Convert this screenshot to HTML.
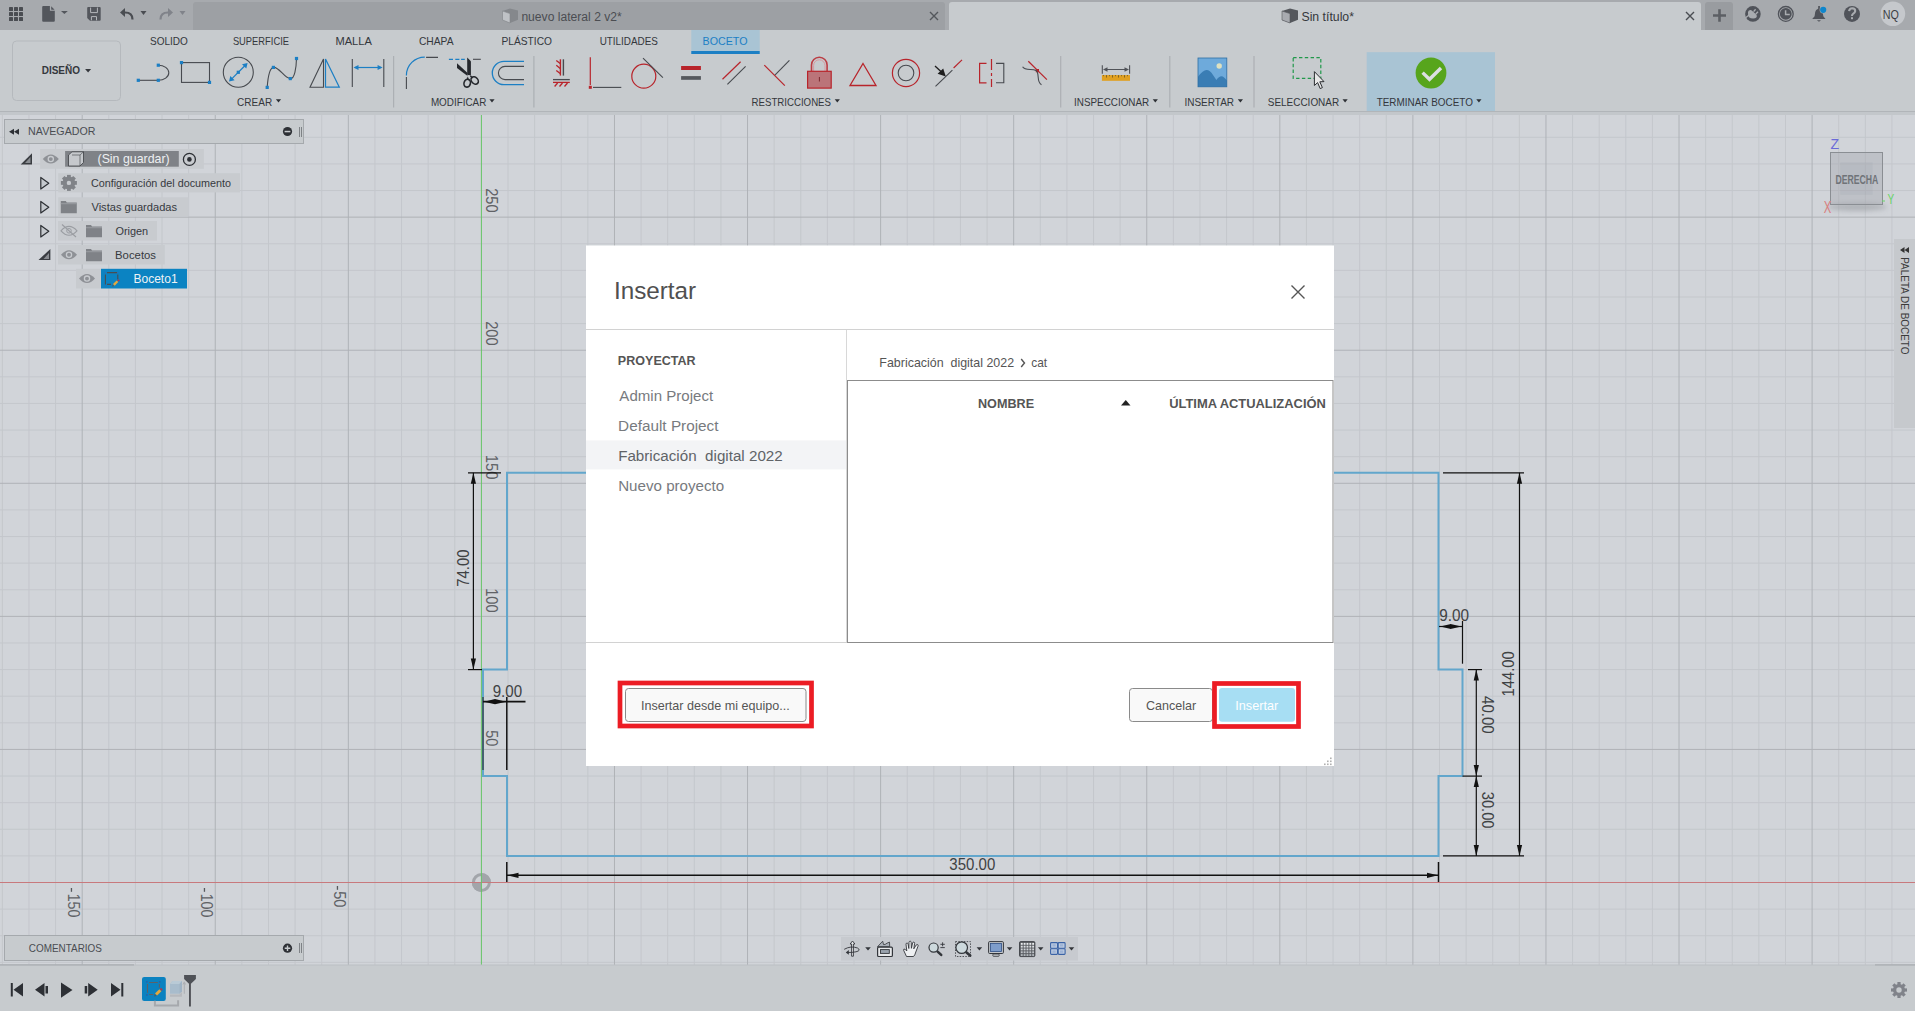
<!DOCTYPE html>
<html><head><meta charset="utf-8"><style>
html,body{margin:0;padding:0;width:1915px;height:1011px;overflow:hidden;background:#d1d4d9;}
svg{display:block;font-family:"Liberation Sans", sans-serif;}
</style></head><body>
<svg width="1915" height="1011" viewBox="0 0 1915 1011">
<rect x="0" y="0" width="1915" height="1011" fill="#d1d4d9" />
<path d="M2.35,115V965M28.96,115V965M55.58,115V965M108.80,115V965M135.42,115V965M162.03,115V965M188.65,115V965M241.87,115V965M268.49,115V965M295.10,115V965M321.72,115V965M374.94,115V965M401.56,115V965M428.17,115V965M454.79,115V965M508.01,115V965M534.63,115V965M561.24,115V965M587.86,115V965M641.08,115V965M667.70,115V965M694.31,115V965M720.93,115V965M774.15,115V965M800.77,115V965M827.38,115V965M854.00,115V965M907.22,115V965M933.84,115V965M960.45,115V965M987.07,115V965M1040.29,115V965M1066.91,115V965M1093.52,115V965M1120.14,115V965M1173.36,115V965M1199.98,115V965M1226.59,115V965M1253.21,115V965M1306.43,115V965M1333.05,115V965M1359.66,115V965M1386.28,115V965M1439.50,115V965M1466.12,115V965M1492.73,115V965M1519.35,115V965M1572.57,115V965M1599.19,115V965M1625.80,115V965M1652.42,115V965M1705.64,115V965M1732.26,115V965M1758.87,115V965M1785.49,115V965M1838.71,115V965M1865.33,115V965M1891.94,115V965M0,962.34H1915M0,935.73H1915M0,909.11H1915M0,855.89H1915M0,829.27H1915M0,802.66H1915M0,776.04H1915M0,722.82H1915M0,696.20H1915M0,669.59H1915M0,642.97H1915M0,589.75H1915M0,563.13H1915M0,536.52H1915M0,509.90H1915M0,456.68H1915M0,430.06H1915M0,403.45H1915M0,376.83H1915M0,323.61H1915M0,296.99H1915M0,270.38H1915M0,243.76H1915M0,190.54H1915M0,163.92H1915M0,137.31H1915" stroke="#c4c7cc" stroke-width="1" fill="none"/>
<path d="M82.19,115V965M215.26,115V965M348.33,115V965M614.47,115V965M747.54,115V965M880.61,115V965M1013.68,115V965M1146.75,115V965M1279.82,115V965M1412.89,115V965M1545.96,115V965M1679.03,115V965M1812.10,115V965M0,749.43H1915M0,616.36H1915M0,483.29H1915M0,350.22H1915M0,217.15H1915" stroke="#afb2b7" stroke-width="1" fill="none"/>
<circle cx="481.4" cy="882.5" r="8" fill="none" stroke="#a2a5aa" stroke-width="3"/>
<path d="M481.4,882.5 L481.4,873.0 A9.5,9.5 0 0 1 490.9,882.5 Z" fill="#a2a5aa"/>
<path d="M481.4,882.5 L481.4,892.0 A9.5,9.5 0 0 1 471.9,882.5 Z" fill="#a2a5aa"/>
<line x1="0" y1="882.5" x2="1915" y2="882.5" stroke="#c8797d" stroke-width="1" />
<line x1="481.4" y1="115" x2="481.4" y2="965" stroke="#66c466" stroke-width="1" />
<g transform="translate(491.50,188.90) rotate(90)">
<text x="-0.73" y="5.50" font-size="15.99" font-weight="normal" fill="#606266" textLength="24.39" lengthAdjust="spacingAndGlyphs" style="white-space:pre" >250</text>
</g>
<g transform="translate(491.50,321.90) rotate(90)">
<text x="-0.73" y="5.50" font-size="15.99" font-weight="normal" fill="#606266" textLength="24.39" lengthAdjust="spacingAndGlyphs" style="white-space:pre" >200</text>
</g>
<g transform="translate(491.50,455.80) rotate(90)">
<text x="-1.11" y="5.50" font-size="15.99" font-weight="normal" fill="#606266" textLength="24.68" lengthAdjust="spacingAndGlyphs" style="white-space:pre" >150</text>
</g>
<g transform="translate(491.30,589.30) rotate(90)">
<text x="-1.09" y="5.50" font-size="15.99" font-weight="normal" fill="#606266" textLength="24.36" lengthAdjust="spacingAndGlyphs" style="white-space:pre" >100</text>
</g>
<g transform="translate(491.30,730.90) rotate(90)">
<text x="-0.58" y="5.50" font-size="15.99" font-weight="normal" fill="#606266" textLength="16.05" lengthAdjust="spacingAndGlyphs" style="white-space:pre" >50</text>
</g>
<g transform="translate(73.60,894.70) rotate(90)">
<text x="-1.07" y="5.50" font-size="15.99" font-weight="normal" fill="#606266" textLength="23.82" lengthAdjust="spacingAndGlyphs" style="white-space:pre" >150</text>
</g>
<g transform="translate(206.80,894.70) rotate(90)">
<text x="-1.07" y="5.50" font-size="15.99" font-weight="normal" fill="#606266" textLength="23.82" lengthAdjust="spacingAndGlyphs" style="white-space:pre" >100</text>
</g>
<g transform="translate(339.90,891.80) rotate(90)">
<text x="-0.58" y="5.50" font-size="15.99" font-weight="normal" fill="#606266" textLength="16.27" lengthAdjust="spacingAndGlyphs" style="white-space:pre" >50</text>
</g>
<g fill="#55585c"><rect x="70.8" y="888" width="1.3" height="3.8"/><rect x="203.8" y="888" width="1.3" height="3.8"/><rect x="336.8" y="886" width="1.3" height="3.8"/></g>
<path d="M507,472.8 L1438.5,472.8 L1438.5,669.6 L1462.5,669.6 L1462.5,776.1 L1438.5,776.1 L1438.5,855.9 L507,855.9 L507,776.1 L483,776.1 L483,669.6 L507,669.6 Z" stroke="#62a6cc" stroke-width="2" fill="none"/>
<line x1="468" y1="472.8" x2="501" y2="472.8" stroke="#111" stroke-width="1.2" />
<line x1="468" y1="669.6" x2="482" y2="669.6" stroke="#111" stroke-width="1.2" />
<line x1="473.4" y1="472.8" x2="473.4" y2="669.6" stroke="#111" stroke-width="1.2" />
<path d="M473.4,472.8 L476.00,483.80 L470.80,483.80 Z" fill="#111"/>
<path d="M473.4,669.6 L470.80,658.60 L476.00,658.60 Z" fill="#111"/>
<g transform="translate(468.5,586) rotate(-90)">
<text x="-0.75" y="0.00" font-size="16.28" font-weight="normal" fill="#404244" textLength="37.30" lengthAdjust="spacingAndGlyphs" style="white-space:pre" >74.00</text>
</g>
<line x1="483" y1="697" x2="483" y2="770" stroke="#333" stroke-width="1.2" />
<line x1="506.8" y1="697" x2="506.8" y2="770" stroke="#111" stroke-width="1.5" />
<line x1="483" y1="701.7" x2="525.5" y2="701.7" stroke="#111" stroke-width="1.8" />
<path d="M484,701.7 L495.00,699.10 L495.00,704.30 Z" fill="#111"/>
<path d="M506,701.7 L495.00,704.30 L495.00,699.10 Z" fill="#111"/>
<text x="492.68" y="697.00" font-size="16.42" font-weight="normal" fill="#404244" textLength="29.40" lengthAdjust="spacingAndGlyphs" style="white-space:pre" >9.00</text>
<line x1="1462.5" y1="621" x2="1462.5" y2="663.7" stroke="#111" stroke-width="1.2" />
<line x1="1439" y1="626.5" x2="1462.5" y2="626.5" stroke="#111" stroke-width="1.2" />
<path d="M1440,626.5 L1451.00,623.90 L1451.00,629.10 Z" fill="#111"/>
<path d="M1461.5,626.5 L1450.50,629.10 L1450.50,623.90 Z" fill="#111"/>
<text x="1439.17" y="621.00" font-size="16.42" font-weight="normal" fill="#404244" textLength="29.82" lengthAdjust="spacingAndGlyphs" style="white-space:pre" >9.00</text>
<line x1="1443" y1="472.8" x2="1524" y2="472.8" stroke="#111" stroke-width="1.2" />
<line x1="1443" y1="855.9" x2="1524" y2="855.9" stroke="#111" stroke-width="1.2" />
<line x1="1519.5" y1="472.8" x2="1519.5" y2="855.9" stroke="#111" stroke-width="1.2" />
<path d="M1519.5,472.8 L1522.10,483.80 L1516.90,483.80 Z" fill="#111"/>
<path d="M1519.5,855.9 L1516.90,844.90 L1522.10,844.90 Z" fill="#111"/>
<g transform="translate(1513.9,695.4) rotate(-90)">
<text x="-1.11" y="0.00" font-size="16.28" font-weight="normal" fill="#404244" textLength="45.18" lengthAdjust="spacingAndGlyphs" style="white-space:pre" >144.00</text>
</g>
<line x1="1468" y1="669.6" x2="1482" y2="669.6" stroke="#111" stroke-width="1.2" />
<line x1="1462.5" y1="776.1" x2="1482" y2="776.1" stroke="#111" stroke-width="1.2" />
<line x1="1476.3" y1="669.6" x2="1476.3" y2="855.9" stroke="#111" stroke-width="1.2" />
<path d="M1476.3,669.6 L1478.90,680.60 L1473.70,680.60 Z" fill="#111"/>
<path d="M1476.3,776.1 L1473.70,765.10 L1478.90,765.10 Z" fill="#111"/>
<path d="M1476.3,776.1 L1478.90,787.10 L1473.70,787.10 Z" fill="#111"/>
<path d="M1476.3,855.9 L1473.70,844.90 L1478.90,844.90 Z" fill="#111"/>
<g transform="translate(1482,696.4) rotate(90)">
<text x="-0.34" y="0.00" font-size="16.28" font-weight="normal" fill="#404244" textLength="37.50" lengthAdjust="spacingAndGlyphs" style="white-space:pre" >40.00</text>
</g>
<g transform="translate(1482,792.3) rotate(90)">
<text x="-0.55" y="0.00" font-size="16.28" font-weight="normal" fill="#404244" textLength="36.80" lengthAdjust="spacingAndGlyphs" style="white-space:pre" >30.00</text>
</g>
<line x1="506.8" y1="862" x2="506.8" y2="882" stroke="#111" stroke-width="1.5" />
<line x1="1438.5" y1="862" x2="1438.5" y2="882" stroke="#111" stroke-width="1.5" />
<line x1="507" y1="875.3" x2="1438.5" y2="875.3" stroke="#111" stroke-width="1.5" />
<path d="M507.5,875.3 L518.50,872.70 L518.50,877.90 Z" fill="#111"/>
<path d="M1438,875.3 L1427.00,877.90 L1427.00,872.70 Z" fill="#111"/>
<text x="949.34" y="869.80" font-size="15.70" font-weight="normal" fill="#404244" textLength="45.94" lengthAdjust="spacingAndGlyphs" style="white-space:pre" >350.00</text>
<defs><filter id="sh" x="-50%" y="-50%" width="200%" height="200%"><feGaussianBlur stdDeviation="2.5"/></filter></defs>
<ellipse cx="1857" cy="207" rx="30" ry="4" fill="#9a9da2" opacity="0.6" filter="url(#sh)"/>
<rect x="1830.5" y="152.5" width="52" height="52" fill="#a4a8ae" fill-opacity="0.42" stroke="#8a8e93" stroke-width="1"/>
<rect x="1840.2" y="162.3" width="32.4" height="32.5" fill="#9ca2ac" fill-opacity="0.18"/>
<text x="1835.42" y="184.00" font-size="13.08" font-weight="bold" fill="#6f7378" textLength="42.82" lengthAdjust="spacingAndGlyphs" style="white-space:pre" >DERECHA</text>
<text transform="translate(1830.54,149.00) scale(0.9486,1)" x="0" y="0" font-size="14.83" font-weight="normal" fill="#6a6ad8" >Z</text>
<text transform="translate(1823.75,213.00) scale(0.7033,1)" x="0" y="0" font-size="15.99" font-weight="normal" fill="#d98080" >X</text>
<text transform="translate(1887.47,204.40) scale(0.7033,1)" x="0" y="0" font-size="14.39" font-weight="normal" fill="#66d466" >Y</text>
<line x1="1882" y1="201" x2="1885" y2="201" stroke="#6ad86a" stroke-width="1" />
<rect x="1894" y="239" width="21" height="189" fill="#c6c9cd" />
<path d="M1900,250 L1904.5,247 L1904.5,253 Z M1904.5,250 L1909,247 L1909,253 Z" fill="#333"/>
<g transform="translate(1900.5,258) rotate(90)">
<text x="-0.82" y="-0.50" font-size="11.63" font-weight="normal" fill="#3a3a3a" textLength="97.30" lengthAdjust="spacingAndGlyphs" style="white-space:pre" >PALETA DE BOCETO</text>
</g>
<rect x="0" y="0" width="1915" height="30" fill="#a7aaae" />
<path d="M193,30 V5 Q193,2 196,2 H942 Q945,2 945,5 V30 Z" fill="#9da0a4"/>
<path d="M949,30 V5 Q949,2 952,2 H1698 Q1701,2 1701,5 V30 Z" fill="#c7cbce"/>
<path d="M1705,30 V5 Q1705,2 1708,2 H1730 Q1733,2 1733,5 V30 Z" fill="#999ca0"/>
<rect x="9" y="7" width="4" height="4" rx="0.6" fill="#4a4d52"/><rect x="9" y="12" width="4" height="4" rx="0.6" fill="#4a4d52"/><rect x="9" y="17" width="4" height="4" rx="0.6" fill="#4a4d52"/><rect x="14" y="7" width="4" height="4" rx="0.6" fill="#4a4d52"/><rect x="14" y="12" width="4" height="4" rx="0.6" fill="#4a4d52"/><rect x="14" y="17" width="4" height="4" rx="0.6" fill="#4a4d52"/><rect x="19" y="7" width="4" height="4" rx="0.6" fill="#4a4d52"/><rect x="19" y="12" width="4" height="4" rx="0.6" fill="#4a4d52"/><rect x="19" y="17" width="4" height="4" rx="0.6" fill="#4a4d52"/>
<path d="M43.2,6 H49.9 V10.8 H54.8 V20.7 Q54.8,21.7 53.8,21.7 H43.2 Q42.2,21.7 42.2,20.7 V7 Q42.2,6 43.2,6 Z" fill="#53565c"/>
<path d="M51.2,6.2 V9.7 H54.6 Z" fill="#53565c"/>
<path d="M61,11 H67.8 L64.4,13.9 Z" fill="#53565c"/>
<path d="M88.2,7.1 H99.7 Q100.7,7.1 100.7,8.1 V19.8 Q100.7,20.8 99.7,20.8 H90 L87.2,18 V8.1 Q87.2,7.1 88.2,7.1 Z" fill="#53565c"/>
<path d="M90.6,7.6 V12.6 H97.4 V7.6 M91.4,20.3 V16.6 H96.5 V20.3" stroke="#b4b7bb" stroke-width="1" fill="none"/>
<path d="M132.5,19.5 Q132.5,12.5 125,12.5 H122" stroke="#4a4d52" stroke-width="2.2" fill="none"/><path d="M120,12.5 L125,8 V17 Z" fill="#4a4d52"/>
<path d="M140.5,11 L146.5,11 L143.5,15 Z" fill="#4a4d52"/>
<path d="M160.5,19.5 Q160.5,12.5 168,12.5 H171" stroke="#80838a" stroke-width="2.2" fill="none"/><path d="M173,12.5 L168,8 V17 Z" fill="#80838a"/>
<path d="M179.5,11 L185.5,11 L182.5,15 Z" fill="#80838a"/>
<path d="M502.5,11 L510,8.4 L518,10.6 V19.8 L510,23 L502.5,20 Z" fill="#85888c"/><path d="M502.5,11 L510,13.6 V23 L502.5,20 Z" fill="#bfc2c6" stroke="#85888c" stroke-width="0.6"/>
<text x="521.38" y="20.50" font-size="12.50" font-weight="normal" fill="#4b4d52" textLength="100.41" lengthAdjust="spacingAndGlyphs" style="white-space:pre" >nuevo lateral 2 v2*</text>
<path d="M930,12 L938,20 M938,12 L930,20" stroke="#54575c" stroke-width="1.4"/>
<path d="M1282,11 L1290,8.4 L1298,10.6 V19.8 L1290,23 L1282,20 Z" fill="#55585d"/><path d="M1282,11 L1290,13.6 V23 L1282,20 Z" fill="#a8abb0" stroke="#55585d" stroke-width="0.6"/>
<text x="1301.45" y="21.40" font-size="13.66" font-weight="normal" fill="#35373b" textLength="52.54" lengthAdjust="spacingAndGlyphs" style="white-space:pre" >Sin título*</text>
<path d="M1686,12 L1694,20 M1694,12 L1686,20" stroke="#4a4d52" stroke-width="1.4"/>
<path d="M1719.5,9.2 V21.8 M1713,15.5 H1726" stroke="#5c5f64" stroke-width="2.6"/>
<circle cx="1752.9" cy="13.9" r="7.8" fill="#50535a"/>
<path d="M1748,12 Q1748.5,9.8 1751,10 L1753.5,12 L1756.5,14.8 Q1757.5,17.5 1755,18.3 Q1751,18.8 1749,17.2 Q1747.6,15 1748,12 Z" fill="#a9acb0"/>
<path d="M1753.6,11.6 L1755.6,9.3 M1755.8,13.9 L1758,11.8" stroke="#a9acb0" stroke-width="1.4"/>
<path d="M1745.5,17.8 L1749.2,15" stroke="#a9acb0" stroke-width="1.3"/>
<circle cx="1785.8" cy="13.9" r="7.4" fill="none" stroke="#50535a" stroke-width="1.3"/><circle cx="1785.8" cy="13.9" r="5.9" fill="#50535a"/><path d="M1785.6,10.2 V14.5 H1789.8" stroke="#a9acb0" stroke-width="1.5" fill="none"/>
<path d="M1818.2,6 H1819.9 V8.8 Q1822.5,9.8 1822.8,13 L1823.3,16.3 L1825.5,18.9 H1812.2 L1814.6,16.3 L1815.2,12 Q1815.6,9.6 1818.2,8.8 Z" fill="#50535a"/><path d="M1816.9,20.2 H1821 L1819,21.8 Z" fill="#50535a"/>
<circle cx="1823.2" cy="9.8" r="3.6" fill="#a9acb0"/><circle cx="1823.2" cy="9.8" r="3.1" fill="#0f86cc"/>
<circle cx="1852" cy="13.9" r="8" fill="#50535a"/>
<path d="M1849.1,11.2 Q1849.4,8.3 1852.3,8.3 Q1855.3,8.5 1855.2,11.1 Q1855,12.6 1853.3,13.6 Q1852,14.4 1852,16" stroke="#a9acb0" stroke-width="2.1" fill="none"/><rect x="1851" y="17.2" width="2" height="2" fill="#a9acb0"/>
<circle cx="1892.9" cy="13.7" r="12.3" fill="#c5c8cc"/>
<text x="1882.81" y="18.50" font-size="12.50" font-weight="normal" fill="#3c3f44" textLength="16.10" lengthAdjust="spacingAndGlyphs" style="white-space:pre" >NQ</text>
<rect x="0" y="30" width="1915" height="81" fill="#c7cbce" />
<rect x="0" y="111" width="1915" height="1" fill="#b1b5b9" />
<rect x="0" y="112" width="1915" height="3" fill="#c3c7cb" />
<rect x="12.5" y="41" width="108" height="59.5" rx="4" fill="none" stroke="#b5b9bd" stroke-width="1"/>
<text x="41.73" y="73.90" font-size="11.48" font-weight="bold" fill="#35383d" textLength="38.31" lengthAdjust="spacingAndGlyphs" style="white-space:pre" >DISEÑO</text>
<path d="M85.1,69 L91.1,69 L88.1,72.6 Z" fill="#35383d"/>
<rect x="691.3" y="30" width="68.4" height="24" fill="#a9c4d4" />
<rect x="691.3" y="51" width="68.4" height="3" fill="#1c7fc4" />
<text x="149.95" y="44.80" font-size="11.34" font-weight="normal" fill="#34373c" textLength="37.94" lengthAdjust="spacingAndGlyphs" style="white-space:pre" >SOLIDO</text>
<text x="232.88" y="44.80" font-size="11.34" font-weight="normal" fill="#34373c" textLength="56.10" lengthAdjust="spacingAndGlyphs" style="white-space:pre" >SUPERFICIE</text>
<text x="335.38" y="44.80" font-size="11.34" font-weight="normal" fill="#34373c" textLength="36.44" lengthAdjust="spacingAndGlyphs" style="white-space:pre" >MALLA</text>
<text x="418.89" y="44.80" font-size="11.34" font-weight="normal" fill="#34373c" textLength="34.63" lengthAdjust="spacingAndGlyphs" style="white-space:pre" >CHAPA</text>
<text x="501.56" y="44.80" font-size="11.34" font-weight="normal" fill="#34373c" textLength="50.43" lengthAdjust="spacingAndGlyphs" style="white-space:pre" >PLÁSTICO</text>
<text x="599.63" y="44.80" font-size="11.34" font-weight="normal" fill="#34373c" textLength="58.32" lengthAdjust="spacingAndGlyphs" style="white-space:pre" >UTILIDADES</text>
<text x="702.52" y="44.80" font-size="11.34" font-weight="normal" fill="#1c7fc4" textLength="44.99" lengthAdjust="spacingAndGlyphs" style="white-space:pre" >BOCETO</text>
<rect x="1366.7" y="52.2" width="128.3" height="58.8" fill="#a9c4d4" />
<text x="237.10" y="106.10" font-size="11.19" font-weight="normal" fill="#34373c" textLength="35.08" lengthAdjust="spacingAndGlyphs" style="white-space:pre" >CREAR</text>
<path d="M275.9,99.2 L281.1,99.2 L278.5,102.60000000000001 Z" fill="#2d3035"/>
<text x="430.88" y="106.10" font-size="11.19" font-weight="normal" fill="#34373c" textLength="55.47" lengthAdjust="spacingAndGlyphs" style="white-space:pre" >MODIFICAR</text>
<path d="M489.4,99.2 L494.6,99.2 L492,102.60000000000001 Z" fill="#2d3035"/>
<text x="751.50" y="106.10" font-size="11.19" font-weight="normal" fill="#34373c" textLength="79.52" lengthAdjust="spacingAndGlyphs" style="white-space:pre" >RESTRICCIONES</text>
<path d="M834.6999999999999,99.2 L839.9,99.2 L837.3,102.60000000000001 Z" fill="#2d3035"/>
<text x="1074.09" y="106.10" font-size="11.19" font-weight="normal" fill="#34373c" textLength="75.08" lengthAdjust="spacingAndGlyphs" style="white-space:pre" >INSPECCIONAR</text>
<path d="M1152.7,99.2 L1157.8999999999999,99.2 L1155.3,102.60000000000001 Z" fill="#2d3035"/>
<text x="1184.48" y="106.10" font-size="11.19" font-weight="normal" fill="#34373c" textLength="49.59" lengthAdjust="spacingAndGlyphs" style="white-space:pre" >INSERTAR</text>
<path d="M1237.8000000000002,99.2 L1243.0,99.2 L1240.4,102.60000000000001 Z" fill="#2d3035"/>
<text x="1267.75" y="106.10" font-size="11.19" font-weight="normal" fill="#34373c" textLength="71.41" lengthAdjust="spacingAndGlyphs" style="white-space:pre" >SELECCIONAR</text>
<path d="M1342.5,99.2 L1347.6999999999998,99.2 L1345.1,102.60000000000001 Z" fill="#2d3035"/>
<text x="1376.68" y="106.10" font-size="11.19" font-weight="normal" fill="#34373c" textLength="96.19" lengthAdjust="spacingAndGlyphs" style="white-space:pre" >TERMINAR BOCETO</text>
<path d="M1476.3000000000002,99.2 L1481.5,99.2 L1478.9,102.60000000000001 Z" fill="#2d3035"/>
<rect x="393.0" y="56" width="1.2" height="51.5" fill="#acb0b4" />
<rect x="533.3" y="56" width="1.2" height="51.5" fill="#acb0b4" />
<rect x="1060.1000000000001" y="56" width="1.2" height="51.5" fill="#acb0b4" />
<rect x="1169.2" y="56" width="1.2" height="51.5" fill="#acb0b4" />
<rect x="1253.4" y="56" width="1.2" height="51.5" fill="#acb0b4" />
<path d="M139,80.3 H158.3" stroke="#474a4f" stroke-width="1.1"/><path d="M158.3,65.2 A10.5,7.55 0 0 1 158.3,80.3" stroke="#474a4f" stroke-width="1.1" fill="none"/>
<rect x="136.70000000000002" y="78.7" width="3.2" height="3.2" fill="#1c7fc4"/>
<rect x="156.70000000000002" y="78.7" width="3.2" height="3.2" fill="#1c7fc4"/>
<rect x="156.70000000000002" y="63.6" width="3.2" height="3.2" fill="#1c7fc4"/>
<rect x="181.5" y="62.6" width="28" height="19.8" fill="none" stroke="#474a4f" stroke-width="1.1"/>
<rect x="179.9" y="61.0" width="3.2" height="3.2" fill="#1c7fc4"/>
<rect x="207.9" y="80.80000000000001" width="3.2" height="3.2" fill="#1c7fc4"/>
<circle cx="238.3" cy="72.3" r="15" fill="none" stroke="#474a4f" stroke-width="1.1"/>
<path d="M230.5,80.1 L246.1,64.5" stroke="#1c7fc4" stroke-width="1.2"/><path d="M229,81.6 L230.3,76 L234.6,80.3 Z M247.6,63 L246.3,68.6 L242,64.3 Z" fill="#1c7fc4"/><rect x="236.7" y="70.7" width="3.2" height="3.2" fill="#1c7fc4"/>
<path d="M267.2,87.4 C268,76 270,68 273.4,67.4 C279,66.5 284,78 290.3,78.6 C294.5,79 296.3,68 296.5,58.5" stroke="#474a4f" stroke-width="1.1" fill="none"/>
<rect x="265.59999999999997" y="85.80000000000001" width="3.2" height="3.2" fill="#1c7fc4"/>
<rect x="271.79999999999995" y="65.80000000000001" width="3.2" height="3.2" fill="#1c7fc4"/>
<rect x="288.7" y="77.0" width="3.2" height="3.2" fill="#1c7fc4"/>
<rect x="294.9" y="56.9" width="3.2" height="3.2" fill="#1c7fc4"/>
<path d="M323.5,59 V87.2 H310 Z" stroke="#474a4f" stroke-width="1.1" fill="none"/><path d="M325.5,59 V87.2 H339.3 Z" stroke="#1c7fc4" stroke-width="1.2" fill="none"/>
<path d="M352.3,59 V87 M383.8,59 V87" stroke="#474a4f" stroke-width="1.1"/><path d="M355,67.5 H381" stroke="#1c7fc4" stroke-width="1.2"/><path d="M353.5,67.5 L358.5,65 V70 Z M382.6,67.5 L377.6,65 V70 Z" fill="#1c7fc4"/>
<path d="M406.4,75.4 A18.3,18.3 0 0 1 424.8,57.1" stroke="#1c7fc4" stroke-width="1.2" fill="none"/><path d="M426.1,57.4 H438 M406.4,77.1 V89" stroke="#474a4f" stroke-width="1.1"/>
<path d="M448.9,59.3 H453 M455.3,59.3 H459.4 M461.1,59.3 H464.8" stroke="#1c7fc4" stroke-width="1.2"/><path d="M473,59.3 H480.8" stroke="#474a4f" stroke-width="1.1"/>
<path d="M467.2,57.4 L470.9,61.2 V75.8 L467.2,74.4 Z" fill="#25282d"/><path d="M457,63.2 V68 L466.9,75.4 L467.6,73 Z" fill="#25282d"/>
<ellipse cx="467.2" cy="83.2" rx="3.2" ry="3.95" fill="none" stroke="#25282d" stroke-width="1.6" transform="rotate(15 467.2 83.2)"/><ellipse cx="474.7" cy="80.5" rx="3.1" ry="4.1" fill="none" stroke="#25282d" stroke-width="1.6" transform="rotate(-45 474.7 80.5)"/>
<path d="M468.5,74 L467.5,79 M470.5,76 L472.5,78" stroke="#25282d" stroke-width="1.6"/><circle cx="468.5" cy="76.4" r="1.3" fill="#c7cbce"/>
<path d="M524,61.3 H504 A11.7,11.7 0 0 0 504,84.7 H524" stroke="#1c7fc4" stroke-width="1.3" fill="none"/><path d="M524,66.4 H505 A6.6,6.6 0 0 0 505,79.6 H524" stroke="#474a4f" stroke-width="1.1" fill="none"/>
<path d="M560.4,59.3 V75.6" stroke="#b8242b" stroke-width="1.4"/><path d="M563.4,59.3 V75.6" stroke="#474a4f" stroke-width="1.4"/>
<path d="M556.3,60.4 L560.2,63.6 M556.3,65.3 L560.2,68.6 M556.3,70.4 L560.2,73.6" stroke="#b8242b" stroke-width="1.3"/>
<path d="M553,79.6 H569.8" stroke="#474a4f" stroke-width="1.3"/><path d="M553,82.4 H569.8" stroke="#b8242b" stroke-width="1.3"/>
<path d="M554.6,86.5 L557.6,83 M559.5,86.5 L562.5,83 M564.5,86.5 L567.5,83" stroke="#b8242b" stroke-width="1.3"/>
<path d="M590.3,57.2 V85" stroke="#b8242b" stroke-width="1.2"/><rect x="588.8" y="85.8" width="3" height="3" fill="#b8242b"/><path d="M593,87.4 H621.3" stroke="#474a4f" stroke-width="1.1"/>
<circle cx="643.8" cy="76.2" r="12" fill="none" stroke="#b8242b" stroke-width="1.2"/><path d="M643,58.2 L662.9,77.6" stroke="#474a4f" stroke-width="1.1"/>
<rect x="681.1" y="66" width="19.8" height="4" fill="#b8242b"/><rect x="681.1" y="76.1" width="19.8" height="3.7" fill="#55585d"/>
<path d="M722.5,79.3 L740.6,61.7" stroke="#b8242b" stroke-width="1.2"/><path d="M727.4,84.3 L745.6,66.4" stroke="#474a4f" stroke-width="1.1"/>
<path d="M764.3,65.2 L784.8,85.7" stroke="#b8242b" stroke-width="1.2"/><path d="M774.9,75.1 L789.4,60.3" stroke="#474a4f" stroke-width="1.1"/>
<path d="M811.5,71 V65 A7.8,7.8 0 0 1 827.1,65 V71" stroke="#b8242b" stroke-width="1.6" fill="none" opacity="0.85"/><path d="M813.6,71 V65.5 A5.7,5.7 0 0 1 825,65.5 V71" stroke="#d79aa0" stroke-width="1" fill="none"/>
<rect x="807.6" y="71.3" width="23.6" height="16.8" fill="#bb7479" stroke="#b8242b" stroke-width="1.2"/><path d="M819.4,77 V81.5" stroke="#7a2a2e" stroke-width="1"/>
<path d="M863,63.5 L876,85.5 H850 Z" stroke="#b8242b" stroke-width="1.3" fill="none"/>
<circle cx="906" cy="73" r="13.6" fill="none" stroke="#b8242b" stroke-width="1.2"/><circle cx="906" cy="73" r="7.8" fill="none" stroke="#474a4f" stroke-width="1.1"/>
<path d="M935.5,86.4 L952.4,70.2" stroke="#474a4f" stroke-width="1.1"/><path d="M953.6,68 L962,59.9" stroke="#b8242b" stroke-width="1.2"/><path d="M935,66 L942,72.5" stroke="#1e1e1e" stroke-width="1.3"/><path d="M945.8,76.6 L937.6,73.8 L943.2,68.4 Z" fill="#1e1e1e"/>
<path d="M986.5,63.4 H979.6 V82.8 H986.5" stroke="#b8242b" stroke-width="1.2" fill="none"/><path d="M991.5,59 V70 M991.5,73 V76 M991.5,79 V87" stroke="#b8242b" stroke-width="1.2"/><path d="M996,63.4 H1003.8 V82.8 H996" stroke="#474a4f" stroke-width="1.1" fill="none"/>
<path d="M1028.3,61.3 L1046.9,79.6" stroke="#b8242b" stroke-width="1.2"/><rect x="1035.8" y="69" width="3.2" height="3.2" fill="#b8242b"/><path d="M1022.6,66.7 C1025,71 1032,68.5 1036,70.5 C1040,73 1036,82 1041.5,84.7" stroke="#474a4f" stroke-width="1.1" fill="none"/>
<rect x="1101.9" y="75.1" width="28.1" height="5.7" fill="#e0a020"/>
<path d="M1103.5,75.1 V76.2 M1106.5,75.1 V77.5 M1109.5,75.1 V76.2 M1112.5,75.1 V77.5 M1115.5,75.1 V76.2 M1118.5,75.1 V77.5 M1121.5,75.1 V76.2 M1124.5,75.1 V77.5 M1127.5,75.1 V76.2" stroke="#6b5420" stroke-width="0.8"/>
<path d="M1102.3,65.2 V73.7 M1129.6,65.2 V73.7 M1104,69.5 H1128" stroke="#505358" stroke-width="1.1"/><path d="M1103,69.5 L1107.5,67.3 V71.7 Z M1129,69.5 L1124.5,67.3 V71.7 Z" fill="#505358"/>
<rect x="1198" y="58" width="28.8" height="28.8" fill="#6eaadb"/><circle cx="1219.2" cy="66" r="2.7" fill="#dfe1c0"/>
<path d="M1198,76.7 Q1203,70 1206.5,70 Q1210,70 1213,75 L1216.4,80 Q1219,76.3 1221.5,76.3 Q1224,76.5 1226.8,80.5 V86.8 H1198 Z" fill="#3a7db4"/>
<rect x="1198" y="58" width="28.8" height="28.8" fill="none" stroke="#2f6fa3" stroke-width="0.8"/>
<rect x="1293.2" y="57.6" width="27.6" height="20.7" fill="none" stroke="#20984a" stroke-width="1.2" stroke-dasharray="3.4,2.4"/>
<path d="M1314.4,71.6 V85.5 L1317.6,82.6 L1320.2,88.6 L1322.4,87.6 L1319.8,81.8 L1324,81.6 Z" fill="#e8e8e8" stroke="#2d2f33" stroke-width="1"/>
<circle cx="1431" cy="73" r="15.4" fill="#57a51c"/><path d="M1422.6,72.6 L1429.5,79.3 L1441,68" stroke="#dcdfe2" stroke-width="3.4" fill="none"/>
<rect x="4.5" y="119.5" width="299" height="24" fill="#c7cbce" stroke="#a5a9ad" stroke-width="1"/>
<path d="M9,131.8 L14,128.8 V134.8 Z M14,131.8 L19,128.8 V134.8 Z" fill="#2d3035"/>
<text x="28.12" y="135.00" font-size="11.19" font-weight="normal" fill="#4a4d52" textLength="67.37" lengthAdjust="spacingAndGlyphs" style="white-space:pre" >NAVEGADOR</text>
<circle cx="287.5" cy="131.5" r="4.6" fill="#2d3035"/><rect x="284.6" y="130.8" width="5.8" height="1.5" fill="#c7cbce"/>
<path d="M299.5,127 V137 M301.5,127 V137" stroke="#6b6e73" stroke-width="0.8"/>
<rect x="40.1" y="149" width="163.8" height="19.8" fill="#c8cbcf" />
<path d="M32,153.2 V164.4 H20.7 Z" fill="#3a3d42"/><path d="M30.5,157 V163 H25 Z" fill="#8a8d92"/>
<path d="M42.8,159.1 Q50.8,150.1 58.8,159.1 Q50.8,168.1 42.8,159.1 Z" fill="#8e9196"/><circle cx="50.8" cy="159.1" r="2.6" fill="none" stroke="#c8cbcf" stroke-width="1.3"/>
<rect x="65.1" y="151" width="113.7" height="15.7" fill="#7f8287" />
<path d="M68.5,155 L72,151.8 H83.5 V162.5 L80,166 H68.5 Z" fill="#c5c8cc" stroke="#3c3f44" stroke-width="0.8"/><path d="M72,155 H80 V166 M80,155 L83.5,151.8" stroke="#3c3f44" stroke-width="0.6" fill="none"/>
<text x="97.53" y="163.20" font-size="11.92" font-weight="normal" fill="#eef0f2" textLength="72.13" lengthAdjust="spacingAndGlyphs" style="white-space:pre" >(Sin guardar)</text>
<circle cx="189.4" cy="159.4" r="6" fill="none" stroke="#2d3035" stroke-width="1.3"/><circle cx="189.4" cy="159.4" r="2.3" fill="#2d3035"/>
<rect x="58.2" y="173.2" width="181.8" height="19.2" fill="#c8cbcf" />
<path d="M40.8,177.4 L48.8,183.2 L40.8,189.0 Z" fill="#c5c9ce" stroke="#2d3035" stroke-width="1.2" stroke-linejoin="round"/>
<g transform="translate(68.9,182.9)"><circle r="4.3" fill="none" stroke="#808388" stroke-width="4.2"/><rect x="-1.9" y="-8" width="3.8" height="3.6" fill="#808388" transform="rotate(0)"/><rect x="-1.9" y="-8" width="3.8" height="3.6" fill="#808388" transform="rotate(45)"/><rect x="-1.9" y="-8" width="3.8" height="3.6" fill="#808388" transform="rotate(90)"/><rect x="-1.9" y="-8" width="3.8" height="3.6" fill="#808388" transform="rotate(135)"/><rect x="-1.9" y="-8" width="3.8" height="3.6" fill="#808388" transform="rotate(180)"/><rect x="-1.9" y="-8" width="3.8" height="3.6" fill="#808388" transform="rotate(225)"/><rect x="-1.9" y="-8" width="3.8" height="3.6" fill="#808388" transform="rotate(270)"/><rect x="-1.9" y="-8" width="3.8" height="3.6" fill="#808388" transform="rotate(315)"/></g>
<text x="90.96" y="187.00" font-size="11.48" font-weight="normal" fill="#36393e" textLength="139.98" lengthAdjust="spacingAndGlyphs" style="white-space:pre" >Configuración del documento</text>
<rect x="58.2" y="197.3" width="130.4" height="19.4" fill="#c8cbcf" />
<path d="M40.8,201.4 L48.8,207.2 L40.8,213.0 Z" fill="#c5c9ce" stroke="#2d3035" stroke-width="1.2" stroke-linejoin="round"/>
<path d="M60.8,201 H65.8 L66.8,202.5 H76.8 V213.3 H60.8 Z" fill="#7f8287"/><rect x="60.8" y="203.2" width="16" height="1" fill="#9a9da2"/>
<text x="91.44" y="210.80" font-size="11.48" font-weight="normal" fill="#36393e" textLength="85.64" lengthAdjust="spacingAndGlyphs" style="white-space:pre" >Vistas guardadas</text>
<rect x="58" y="221" width="99" height="19.6" fill="#c8cbcf" />
<path d="M40.8,225.4 L48.8,231.2 L40.8,237.0 Z" fill="#c5c9ce" stroke="#2d3035" stroke-width="1.2" stroke-linejoin="round"/>
<path d="M61,230.8 Q69,222 77,230.8 Q69,239.6 61,230.8 Z" fill="none" stroke="#9a9da2" stroke-width="1.1"/><circle cx="69" cy="230.8" r="2.3" fill="none" stroke="#9a9da2" stroke-width="1"/><path d="M62,224.5 L76,237" stroke="#9a9da2" stroke-width="1.1"/>
<path d="M86,225 H91 L92,226.5 H102 V237.3 H86 Z" fill="#7f8287"/><rect x="86" y="227.2" width="16" height="1" fill="#9a9da2"/>
<text x="115.48" y="234.80" font-size="11.48" font-weight="normal" fill="#36393e" textLength="32.72" lengthAdjust="spacingAndGlyphs" style="white-space:pre" >Origen</text>
<rect x="58" y="245" width="106.8" height="19.5" fill="#c8cbcf" />
<path d="M50.4,249 V260 H38.5 Z" fill="#3a3d42"/><path d="M49,253 V259 H43.5 Z" fill="#8a8d92"/>
<path d="M61,254.8 Q69,245.8 77,254.8 Q69,263.8 61,254.8 Z" fill="#8e9196"/><circle cx="69" cy="254.8" r="2.6" fill="none" stroke="#c8cbcf" stroke-width="1.3"/>
<path d="M86,249 H91 L92,250.5 H102 V261.3 H86 Z" fill="#7f8287"/><rect x="86" y="251.2" width="16" height="1" fill="#9a9da2"/>
<text x="115.07" y="258.80" font-size="11.48" font-weight="normal" fill="#36393e" textLength="40.94" lengthAdjust="spacingAndGlyphs" style="white-space:pre" >Bocetos</text>
<rect x="76" y="268.8" width="25" height="19.7" fill="#c8cbcf" />
<path d="M79,278.6 Q87,269.6 95,278.6 Q87,287.6 79,278.6 Z" fill="#8e9196"/><circle cx="87" cy="278.6" r="2.6" fill="none" stroke="#c8cbcf" stroke-width="1.3"/>
<rect x="101" y="268.8" width="86" height="19.7" fill="#0b83c2" />
<path d="M107,272.6 H117.2 M117.8,274.5 V279.2 M105.4,274.5 V284.5 M107,284.4 H111" stroke="#4a4d52" stroke-width="1.1"/><g fill="#2a6fb8"><circle cx="105.4" cy="272.6" r="0.8"/><circle cx="117.8" cy="272.6" r="0.8"/><circle cx="105.4" cy="286" r="0.8"/></g>
<path d="M113,284 L116.6,280.4 L118.3,282.1 L114.7,285.7 Z" fill="#e4a83c"/><path d="M117.1,279.9 Q118.3,279 119.4,280.1 Q119.8,281.3 118.8,281.6 Z" fill="#d8262c"/><path d="M112.6,284.5 L114.2,286.1 L112.2,286.7 Z" fill="#55585d"/>
<text x="133.41" y="282.80" font-size="12.21" font-weight="normal" fill="#eef2f5" textLength="44.19" lengthAdjust="spacingAndGlyphs" style="white-space:pre" >Boceto1</text>
<rect x="4.5" y="935.5" width="299" height="25" fill="#c7cbce" stroke="#a5a9ad" stroke-width="1"/>
<text x="28.80" y="952.00" font-size="11.34" font-weight="normal" fill="#4a4d52" textLength="73.13" lengthAdjust="spacingAndGlyphs" style="white-space:pre" >COMENTARIOS</text>
<circle cx="287.5" cy="948.2" r="4.6" fill="#2d3035"/><path d="M284.7,948.2 H290.3 M287.5,945.4 V951" stroke="#c7cbce" stroke-width="1.4"/>
<path d="M299.5,943 V953 M301.5,943 V953" stroke="#6b6e73" stroke-width="0.8"/>
<rect x="841" y="937" width="237" height="23.6" fill="#c7cacf" />
<path d="M851.6,956.2 V944 H850.1 L852.5,941 L854.9,944 H853.4 V956.2 Z" fill="#e6e8ea" stroke="#33363b" stroke-width="0.9"/>
<path d="M844.2,949.3 Q851,945.5 857.5,948 Q861.5,950.5 856,951.8 Q852,952.6 847.5,952.5" stroke="#33363b" stroke-width="0.9" fill="none"/><path d="M845.8,952.4 L848.8,950 V954.8 Z" fill="#33363b"/>
<path d="M865.2,947.2 L870.8,947.2 L868,950.6 Z" fill="#33363b"/>
<path d="M877.5,946.7 L882.7,941.2 L883.5,944.5 Q885,945 887,943.2 L889.5,942.1 L889.7,946.7 Z" fill="#aab0b8" stroke="#33363b" stroke-width="0.8"/>
<rect x="877.6" y="947.2" width="14.8" height="9.3" rx="1" fill="#e6e8ea" stroke="#33363b" stroke-width="1.2"/><rect x="880.5" y="949.6" width="8.8" height="3.8" fill="#9aa3ae" stroke="#33363b" stroke-width="0.9"/>
<path d="M906.5,956.5 L903.6,950.2 Q903.3,948.7 905,949.2 L906.8,951 L906,944.2 Q906,942.9 907.2,943.1 Q908,943.3 908.2,944.5 L908.8,948.5 L909,942.3 Q909.2,941.1 910.3,941.2 Q911.2,941.4 911.2,942.5 L911.4,948.3 L912.6,942.9 Q913,941.8 914,942.1 Q914.8,942.4 914.6,943.5 L913.8,948.8 L916.2,945 Q916.9,944.2 917.8,944.7 Q918.5,945.3 918,946.2 L915.8,952 Q914.9,955.5 913.5,956.5 Z" fill="#eef0f2" stroke="#33363b" stroke-width="0.9"/>
<path d="M937.6,951.6 L941.2,954.9" stroke="#33363b" stroke-width="2.6" stroke-linecap="round"/><circle cx="933.6" cy="947.6" r="4.6" fill="#cdd9dd" stroke="#33363b" stroke-width="1.2"/><path d="M940.4,944.3 H944.8 M942.6,942.3 V946.3 M940.4,947.6 H944.8" stroke="#33363b" stroke-width="0.9"/>
<rect x="955.5" y="941.6" width="15" height="14.9" fill="none" stroke="#33363b" stroke-width="0.8" stroke-dasharray="1.5,1.3"/><path d="M966.5,952.4 L970.2,955.6" stroke="#33363b" stroke-width="2.6" stroke-linecap="round"/><circle cx="961.7" cy="947.6" r="5.8" fill="#cdd9dd" stroke="#33363b" stroke-width="1.2"/>
<path d="M976.6,947.2 L982.1999999999999,947.2 L979.4,950.6 Z" fill="#33363b"/>
<rect x="988.6" y="941.6" width="14.8" height="11.9" rx="1" fill="#c3c7cc" stroke="#33363b" stroke-width="1"/><rect x="990.6" y="943.6" width="10.8" height="7.9" fill="#7e9dcb" stroke="#2f4f85" stroke-width="0.8"/><rect x="992.8" y="954" width="6.4" height="2.3" rx="0.8" fill="#c3c7cc" stroke="#33363b" stroke-width="0.8"/>
<path d="M1006.8000000000001,947.2 L1012.4,947.2 L1009.6,950.6 Z" fill="#33363b"/>
<rect x="1019.5" y="941.6" width="15.4" height="15" rx="1.2" fill="#585b60" stroke="#33363b" stroke-width="0.8"/><rect x="1020.80" y="942.90" width="1.9" height="1.9" fill="#eceef0"/><rect x="1020.80" y="945.70" width="1.9" height="1.9" fill="#dfe2e5"/><rect x="1020.80" y="948.50" width="1.9" height="1.9" fill="#cfd3d7"/><rect x="1020.80" y="951.30" width="1.9" height="1.9" fill="#bfc3c8"/><rect x="1020.80" y="954.10" width="1.9" height="1.9" fill="#b0b5ba"/><rect x="1023.65" y="942.90" width="1.9" height="1.9" fill="#eceef0"/><rect x="1023.65" y="945.70" width="1.9" height="1.9" fill="#dfe2e5"/><rect x="1023.65" y="948.50" width="1.9" height="1.9" fill="#cfd3d7"/><rect x="1023.65" y="951.30" width="1.9" height="1.9" fill="#bfc3c8"/><rect x="1023.65" y="954.10" width="1.9" height="1.9" fill="#b0b5ba"/><rect x="1026.50" y="942.90" width="1.9" height="1.9" fill="#eceef0"/><rect x="1026.50" y="945.70" width="1.9" height="1.9" fill="#dfe2e5"/><rect x="1026.50" y="948.50" width="1.9" height="1.9" fill="#cfd3d7"/><rect x="1026.50" y="951.30" width="1.9" height="1.9" fill="#bfc3c8"/><rect x="1026.50" y="954.10" width="1.9" height="1.9" fill="#b0b5ba"/><rect x="1029.35" y="942.90" width="1.9" height="1.9" fill="#eceef0"/><rect x="1029.35" y="945.70" width="1.9" height="1.9" fill="#dfe2e5"/><rect x="1029.35" y="948.50" width="1.9" height="1.9" fill="#cfd3d7"/><rect x="1029.35" y="951.30" width="1.9" height="1.9" fill="#bfc3c8"/><rect x="1029.35" y="954.10" width="1.9" height="1.9" fill="#b0b5ba"/><rect x="1032.20" y="942.90" width="1.9" height="1.9" fill="#eceef0"/><rect x="1032.20" y="945.70" width="1.9" height="1.9" fill="#dfe2e5"/><rect x="1032.20" y="948.50" width="1.9" height="1.9" fill="#cfd3d7"/><rect x="1032.20" y="951.30" width="1.9" height="1.9" fill="#bfc3c8"/><rect x="1032.20" y="954.10" width="1.9" height="1.9" fill="#b0b5ba"/>
<path d="M1037.9,947.2 L1043.5,947.2 L1040.7,950.6 Z" fill="#33363b"/>
<g fill="#c0cde0" stroke="#3b63a6" stroke-width="1.1"><rect x="1050.6" y="942.6" width="6.9" height="5.6" rx="0.8"/><rect x="1058.2" y="942.6" width="6.9" height="5.6" rx="0.8"/><rect x="1050.6" y="948.8" width="6.9" height="5.6" rx="0.8"/><rect x="1058.2" y="948.8" width="6.9" height="5.6" rx="0.8"/></g>
<g fill="#9db3d6"><rect x="1052.4" y="944.2" width="3.3" height="2.4"/><rect x="1060" y="944.2" width="3.3" height="2.4"/><rect x="1052.4" y="950.4" width="3.3" height="2.4"/><rect x="1060" y="950.4" width="3.3" height="2.4"/></g>
<path d="M1068.7,947.2 L1074.3,947.2 L1071.5,950.6 Z" fill="#33363b"/>
<rect x="0" y="965" width="1915" height="46" fill="#c7cbce" />
<rect x="0" y="964.5" width="1915" height="1" fill="#bcc0c4" />
<rect x="0" y="964.3" width="134" height="1.2" fill="#a9adb1" />
<rect x="1875" y="964.3" width="40" height="1.2" fill="#a9adb1" />
<path d="M10.8,983 H12.8 V996.6 H10.8 Z M23,983 V996.6 L13.5,989.8 Z" fill="#2d3035"/>
<path d="M35,989.8 L44.5,983 V996.6 Z M45.5,986 H48 V993.6 H45.5 Z" fill="#2d3035"/>
<path d="M61,982.5 L72.5,990.1 L61,997.8 Z" fill="#2d3035"/>
<path d="M84.7,986 H87.2 V993.6 H84.7 Z M88.2,983 L97.7,989.8 L88.2,996.6 Z" fill="#2d3035"/>
<path d="M111,983 V996.6 L120.5,989.8 Z M121.3,983 H123.3 V996.6 H121.3 Z" fill="#2d3035"/>
<rect x="142" y="976.9" width="23.8" height="24.1" rx="2.2" fill="#0b82c0"/>
<path d="M149.1,982.5 H157.8 M159.4,984 V987.8 M147.5,984 V992.7 M149.1,994.5 H153.2" stroke="#5e6166" stroke-width="1.1"/>
<g fill="#2a5fa8"><circle cx="146.9" cy="981.8" r="0.9"/><circle cx="159.8" cy="981.8" r="0.9"/><circle cx="146.9" cy="994.9" r="0.9"/></g>
<path d="M155,993.5 L159.3,989.2 L161.4,991.3 L157.1,995.6 Z" fill="#e4a83c"/><path d="M159.8,988.7 Q161,987.8 162.2,988.9 Q162.6,990.2 161.9,990.8 Z" fill="#d8262c"/><path d="M154.6,994.1 L156.5,996 L154.3,996.6 Z" fill="#55585d"/>
<path d="M170,994.5 H179.5 L181.9,992 V996.7 H170 Z" fill="#b6b9bd"/>
<path d="M170,984 L172.5,981.1 H181.9 V991.3 L179.5,993.8 H170 Z" fill="#a8bccc"/><path d="M170,984 L172.5,981.1 H181.9 L179.5,984 Z" fill="#b9cad6"/><path d="M179.5,984 L181.9,981.1 V991.3 L179.5,993.8 Z" fill="#9fb3c4"/>
<path d="M184.3,993.8 V983 M183,984.5 L184.3,981.8 L185.6,984.5" stroke="#a9acb0" stroke-width="0.9" fill="none"/>
<path d="M154.9,1000.8 V1005.6 H178.1 V1000.3" stroke="#a6a9ad" stroke-width="2" fill="none"/>
<path d="M184.1,975.1 H195.9 V978.9 L190.9,983.8 H189 L184.1,978.9 Z" fill="#4f5257"/><rect x="189" y="983" width="1.9" height="23.5" fill="#4f5257"/>
<g transform="translate(1899,990)"><circle r="4.4" fill="none" stroke="#80838a" stroke-width="3.4"/><rect x="-1.6" y="-8" width="3.2" height="3.6" fill="#80838a" transform="rotate(0)"/><rect x="-1.6" y="-8" width="3.2" height="3.6" fill="#80838a" transform="rotate(45)"/><rect x="-1.6" y="-8" width="3.2" height="3.6" fill="#80838a" transform="rotate(90)"/><rect x="-1.6" y="-8" width="3.2" height="3.6" fill="#80838a" transform="rotate(135)"/><rect x="-1.6" y="-8" width="3.2" height="3.6" fill="#80838a" transform="rotate(180)"/><rect x="-1.6" y="-8" width="3.2" height="3.6" fill="#80838a" transform="rotate(225)"/><rect x="-1.6" y="-8" width="3.2" height="3.6" fill="#80838a" transform="rotate(270)"/><rect x="-1.6" y="-8" width="3.2" height="3.6" fill="#80838a" transform="rotate(315)"/></g>
<rect x="586" y="245.5" width="748" height="520.5" fill="#ffffff" />
<rect x="586" y="329" width="748" height="1" fill="#d2d2d2" />
<text x="613.96" y="299.30" font-size="24.71" font-weight="normal" fill="#505050" textLength="82.21" lengthAdjust="spacingAndGlyphs" style="white-space:pre" >Insertar</text>
<path d="M1291.5,285.5 L1304.5,298.5 M1304.5,285.5 L1291.5,298.5" stroke="#555" stroke-width="1.4"/>
<text x="617.85" y="364.80" font-size="13.66" font-weight="bold" fill="#555555" textLength="77.82" lengthAdjust="spacingAndGlyphs" style="white-space:pre" >PROYECTAR</text>
<rect x="586" y="440.4" width="260" height="29" fill="#f3f4f6" />
<text x="619.36" y="401.00" font-size="14.24" font-weight="normal" fill="#777a7e" textLength="93.75" lengthAdjust="spacingAndGlyphs" style="white-space:pre" >Admin Project</text>
<text x="618.14" y="431.00" font-size="14.24" font-weight="normal" fill="#777a7e" textLength="100.40" lengthAdjust="spacingAndGlyphs" style="white-space:pre" >Default Project</text>
<text x="618.15" y="460.80" font-size="14.24" font-weight="normal" fill="#606367" textLength="164.62" lengthAdjust="spacingAndGlyphs" style="white-space:pre" >Fabricación  digital 2022</text>
<text x="618.15" y="490.70" font-size="14.24" font-weight="normal" fill="#777a7e" textLength="106.08" lengthAdjust="spacingAndGlyphs" style="white-space:pre" >Nuevo proyecto</text>
<rect x="846" y="330" width="1" height="312.5" fill="#d8d8d8" />
<rect x="586" y="642" width="261" height="1" fill="#d2d2d2" />
<text x="879.37" y="366.70" font-size="12.35" font-weight="normal" fill="#555555" textLength="134.75" lengthAdjust="spacingAndGlyphs" style="white-space:pre" >Fabricación  digital 2022</text>
<path d="M1021.2,359 L1024.5,363 L1021.2,367" stroke="#555" stroke-width="1.4" fill="none"/>
<text x="1031.19" y="366.70" font-size="12.35" font-weight="normal" fill="#555555" textLength="15.91" lengthAdjust="spacingAndGlyphs" style="white-space:pre" >cat</text>
<rect x="847.5" y="380.5" width="485.5" height="262" fill="none" stroke="#8c8c8c" stroke-width="1"/>
<text x="977.95" y="407.70" font-size="13.66" font-weight="bold" fill="#555555" textLength="56.15" lengthAdjust="spacingAndGlyphs" style="white-space:pre" >NOMBRE</text>
<path d="M1121,405.5 H1130.5 L1125.75,400 Z" fill="#222"/>
<text x="1169.22" y="407.70" font-size="13.66" font-weight="bold" fill="#555555" textLength="156.65" lengthAdjust="spacingAndGlyphs" style="white-space:pre" >ÚLTIMA ACTUALIZACIÓN</text>
<rect x="620" y="683" width="191.5" height="43" fill="none" stroke="#ec1c24" stroke-width="4.7"/>
<rect x="625.5" y="688.5" width="180.5" height="33" rx="3" fill="#f9f9f9" stroke="#8a8a8a" stroke-width="1"/>
<text x="640.94" y="710.20" font-size="13.37" font-weight="normal" fill="#555555" textLength="148.70" lengthAdjust="spacingAndGlyphs" style="white-space:pre" >Insertar desde mi equipo...</text>
<rect x="1129.5" y="688.5" width="83" height="33" rx="3" fill="#f9f9f9" stroke="#8a8a8a" stroke-width="1"/>
<text x="1145.97" y="710.20" font-size="13.37" font-weight="normal" fill="#555555" textLength="50.11" lengthAdjust="spacingAndGlyphs" style="white-space:pre" >Cancelar</text>
<rect x="1214.5" y="683.5" width="84" height="43" fill="none" stroke="#ec1c24" stroke-width="4.7"/>
<rect x="1219" y="688" width="76" height="33.8" rx="3" fill="#a7def3"/>
<text x="1235.33" y="710.20" font-size="13.37" font-weight="normal" fill="#ffffff" textLength="42.86" lengthAdjust="spacingAndGlyphs" style="white-space:pre" >Insertar</text>
<g fill="#b0b0b0"><rect x="1330" y="757.5" width="1.6" height="1.6"/><rect x="1327" y="760.5" width="1.6" height="1.6"/><rect x="1330" y="760.5" width="1.6" height="1.6"/><rect x="1324" y="763.5" width="1.6" height="1.6"/><rect x="1327" y="763.5" width="1.6" height="1.6"/><rect x="1330" y="763.5" width="1.6" height="1.6"/></g>
</svg></body></html>
